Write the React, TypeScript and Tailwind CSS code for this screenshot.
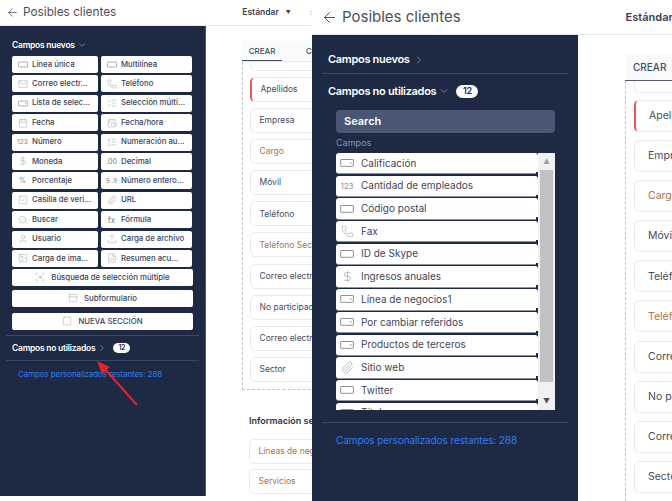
import {
  ArrowLeft,
  ChevronDown,
  ChevronRight,
  DollarSign,
  Paperclip,
  Phone,
  Mail,
  User,
  Upload,
  Image,
  ListChecks,
  ListOrdered,
  CalendarClock,
  Calendar,
  SquareCheck,
  SearchCheck,
  PanelTop,
  Square,
  ScanSearch,
  FileSpreadsheet,
} from "lucide-react";

const font = "font-['Inter','Liberation_Sans',sans-serif]";

const TextBox = ({ size = 12 }: { size?: number }) => (
  <svg width={size} height={size * 0.7} viewBox="0 0 14 10" fill="none" stroke="#8b8f96" strokeWidth="1">
    <rect x="0.5" y="1.5" width="13" height="7" rx="0.5" />
  </svg>
);

const SelectBox = ({ size = 12 }: { size?: number }) => (
  <svg width={size} height={size * 0.7} viewBox="0 0 14 10" fill="none" stroke="#8b8f96" strokeWidth="1">
    <rect x="0.5" y="1.5" width="13" height="7" rx="0.5" />
    <path d="M9.5 4.5h2.5l-1.25 1.5z" fill="#8b8f96" stroke="none" />
  </svg>
);

const Glyph = ({ text, className = "" }: { text: string; className?: string }) => (
  <span className={`text-[#8b8f96] leading-none ${className}`}>{text}</span>
);

const lucide = { size: 10, strokeWidth: 1, color: "#8b8f96" };

type Field = { label: string; icon: React.ReactNode };

const newFields: Field[] = [
  { label: "Línea única", icon: <TextBox size={10} /> },
  { label: "Multilínea", icon: <TextBox size={10} /> },
  { label: "Correo electr...", icon: <Mail {...lucide} /> },
  { label: "Teléfono", icon: <Phone {...lucide} /> },
  { label: "Lista de selec...", icon: <SelectBox size={10} /> },
  { label: "Selección múlti...", icon: <ListChecks {...lucide} /> },
  { label: "Fecha", icon: <Calendar {...lucide} /> },
  { label: "Fecha/hora", icon: <CalendarClock {...lucide} /> },
  { label: "Número", icon: <Glyph text="123" className="text-[6.5px]" /> },
  { label: "Numeración au...", icon: <ListOrdered {...lucide} /> },
  { label: "Moneda", icon: <DollarSign {...lucide} /> },
  { label: "Decimal", icon: <Glyph text=".00" className="text-[7px]" /> },
  { label: "Porcentaje", icon: <Glyph text="%" className="text-[7px]" /> },
  { label: "Número entero...", icon: <Glyph text="9..9" className="text-[6px]" /> },
  { label: "Casilla de veri...", icon: <SquareCheck {...lucide} /> },
  { label: "URL", icon: <Paperclip {...lucide} /> },
  { label: "Buscar", icon: <SearchCheck {...lucide} /> },
  { label: "Fórmula", icon: <Glyph text="fx" className="text-[8px]" /> },
  { label: "Usuario", icon: <User {...lucide} /> },
  { label: "Carga de archivo", icon: <Upload {...lucide} /> },
  { label: "Carga de ima...", icon: <Image {...lucide} /> },
  { label: "Resumen acu...", icon: <FileSpreadsheet {...lucide} /> },
];

const unusedFields: Field[] = [
  { label: "Calificación", icon: <SelectBox size={14} /> },
  { label: "Cantidad de empleados", icon: <Glyph text="123" className="text-[8px]" /> },
  { label: "Código postal", icon: <TextBox size={14} /> },
  { label: "Fax", icon: <Phone size={13} strokeWidth={1} color="#8b8f96" /> },
  { label: "ID de Skype", icon: <TextBox size={14} /> },
  { label: "Ingresos anuales", icon: <DollarSign size={13} strokeWidth={1} color="#8b8f96" /> },
  { label: "Línea de negocios1", icon: <SelectBox size={14} /> },
  { label: "Por cambiar referidos", icon: <SelectBox size={14} /> },
  { label: "Productos de terceros", icon: <SelectBox size={14} /> },
  { label: "Sitio web", icon: <Paperclip size={13} strokeWidth={1} color="#8b8f96" /> },
  { label: "Twitter", icon: <TextBox size={14} /> },
  { label: "Título", icon: <TextBox size={14} /> },
];

const leftCards = [
  { label: "Apellidos", required: true },
  { label: "Empresa" },
  { label: "Cargo", brown: true },
  { label: "Móvil" },
  { label: "Teléfono" },
  { label: "Teléfono Secundario", brown: true },
  { label: "Correo electrónico" },
  { label: "No participación" },
  { label: "Correo electrónico" },
  { label: "Sector" },
];

const WideButton = ({ label, icon, className = "" }: { label: string; icon: React.ReactNode; className?: string }) => (
  <div className={`h-[17px] w-[181px] rounded-[2px] bg-white flex items-center justify-center gap-[6px] text-[7.8px] font-medium text-[#3b4257] ${className}`}>
    {icon}
    <span>{label}</span>
  </div>
);

const FormCard = ({
  label,
  required,
  brown,
  big,
}: {
  label: string;
  required?: boolean;
  brown?: boolean;
  big?: boolean;
}) => (
  <div
    className={`shrink-0 w-[220px] bg-white border border-[#e6ebf3] rounded-[5px] flex items-center whitespace-nowrap ${
      big ? "h-[32px] pl-[13px] text-[10.5px]" : "h-[25px] pl-[8.5px] text-[8.5px]"
    } ${required ? "border-l-2 border-l-[#f0545c]" : ""} ${brown ? "text-[#a8744a]" : "text-[#454b5e]"}`}
  >
    {label}
  </div>
);

const Badge = ({ big }: { big?: boolean }) => (
  <span
    className={`bg-white text-[#1e2a44] rounded-full font-semibold flex items-center justify-center ${
      big ? "w-[22px] h-[13px] text-[9px]" : "w-[17px] h-[10px] text-[7px]"
    }`}
  >
    12
  </span>
);

const LeftPanel = () => (
  <div className="relative w-[312px] shrink-0 h-full flex flex-col overflow-hidden">
    <div className="h-[26px] shrink-0 border-b border-[#e4e8ef] flex items-center pl-[6px] gap-[4px] whitespace-nowrap">
      <ArrowLeft size={13} strokeWidth={1.3} color="#38425c" className="shrink-0" />
      <span className="shrink-0 text-[11.8px] text-[#4a5060]">Posibles clientes</span>
      <span className="shrink-0 ml-[122px] text-[8.5px] font-semibold text-[#3a4052]">Estándar</span>
      <span className="shrink-0 ml-[3px] text-[5px] text-[#3a4052]">▼</span>
      <span className="shrink-0 ml-[15px] text-[9px] text-[#c5c8ce]">≡</span>
    </div>
    <div className="flex flex-1 min-h-0">
      <aside className="w-[206px] shrink-0 bg-[#1e2a44] border-r border-[#4a5a75] h-[470px] pt-[13px]">
        <div className="pl-[12px] flex items-center gap-[2px] text-[8.5px] font-semibold text-white h-[12px] mb-[5px] tracking-[-0.25px]">
          Campos nuevos <ChevronDown size={10} strokeWidth={1.2} color="#b7c0d2" />
        </div>
        <div className="pl-[12px] grid grid-cols-[86px_91px] gap-x-[3px] gap-y-[2.4px] auto-rows-[17px]">
          {newFields.map((f) => (
            <div key={f.label} className="bg-white rounded-[2px] flex items-center text-[7.8px] font-medium text-[#3b4257] whitespace-nowrap">
              <span className="w-[20px] pl-[1px] shrink-0 flex justify-center">{f.icon}</span>
              <span>{f.label}</span>
            </div>
          ))}
        </div>
        <div className="pl-[12px] mt-[2px] flex flex-col gap-[4px]">
          <WideButton label="Búsqueda de selección múltiple" icon={<ScanSearch {...lucide} />} />
          <WideButton label="Subformulario" icon={<PanelTop {...lucide} />} />
          <WideButton label="NUEVA SECCIÓN" icon={<Square {...lucide} />} className="mt-[2px]" />
        </div>
        <div className="mx-[6px] mt-[5px] border-t border-[#38476a] h-[25px] flex items-center pl-[6px] gap-[2px] text-[8.5px] font-semibold text-white tracking-[-0.25px]">
          Campos no utilizados <ChevronRight size={10} strokeWidth={1.2} color="#b7c0d2" />
          <span className="ml-[4px]">
            <Badge />
          </span>
        </div>
        <div className="mx-[6px] border-t border-[#38476a] pt-[7px] pl-[12px] text-[8px] text-[#2f7bf5] tracking-[-0.1px] whitespace-nowrap">
          Campos personalizados restantes: 288
        </div>
      </aside>
      <main className="flex-1 pl-[36px] pt-[15px] min-w-0">
        <div className="w-[220px] h-[21px] bg-[#f9fafc] border-b border-[#e4e8ef] relative flex items-center text-[8px] font-medium text-[#454b5e]">
          <span className="w-[40px] h-full flex items-center justify-center border-b border-[#454b5e]">CREAR</span>
          <span className="ml-[24px]">CONVERTIR</span>
        </div>
        <div className="w-[220px] h-[328px] border-l border-b border-dashed border-[#bfc3c9] pl-[7px] flex flex-col">
          <div className="w-[220px] h-[9px] shrink-0 border border-t-0 border-[#e6ebf3] rounded-b-[5px]" />
          <div className="flex flex-col gap-[6.1px] mt-[6px]">
            {leftCards.map((c, i) => (
              <FormCard key={i} label={c.label} required={c.required} brown={c.brown} />
            ))}
          </div>
        </div>
        <div className="pl-[7px] mt-[24px] text-[9px] font-semibold text-[#2c3244] whitespace-nowrap">Información se</div>
        <div className="pl-[7px] mt-[11px] flex flex-col gap-[5px]">
          <FormCard label="Líneas de negocio" brown />
          <FormCard label="Servicios" brown />
        </div>
      </main>
    </div>
    <svg className="absolute left-[90px] top-[355px]" width="54" height="56" viewBox="0 0 54 56">
      <path d="M47 50 L13 12" stroke="#e3242b" strokeWidth="2" />
      <path d="M7 6 L20 12 L12 19 Z" fill="#e3242b" />
    </svg>
  </div>
);

const RightPanel = () => (
  <div className="w-[360px] shrink-0 h-full flex flex-col overflow-hidden">
    <div className="h-[35px] shrink-0 border-b border-[#e4e8ef] flex items-center pl-[9px] gap-[4px] whitespace-nowrap">
      <ArrowLeft size={17} strokeWidth={1.3} color="#38425c" className="shrink-0" />
      <span className="shrink-0 text-[15px] text-[#4a5060]">Posibles clientes</span>
      <span className="shrink-0 ml-[161px] text-[11px] font-semibold text-[#3a4052]">Estándar</span>
    </div>
    <div className="flex flex-1 min-h-0">
      <aside className="w-[266px] shrink-0 bg-[#1e2a44] flex flex-col">
        <div className="mx-[10px] h-[39px] border-b border-[#38476a] flex items-center pl-[6px] gap-[3px] text-[11px] font-semibold text-white tracking-[-0.3px] pt-[11px]">
          Campos nuevos <ChevronRight size={12} strokeWidth={1.2} color="#b7c0d2" />
        </div>
        <div className="mx-[10px] h-[36px] flex items-center pl-[6px] gap-[2px] text-[11px] font-semibold text-white tracking-[-0.3px] pb-[2px]">
          Campos no utilizados <ChevronDown size={12} strokeWidth={1.2} color="#b7c0d2" />
          <span className="ml-[4px]">
            <Badge big />
          </span>
        </div>
        <div className="ml-[24px] w-[219px] h-[23px] rounded-[4px] bg-[#4a5673] flex items-center pl-[8px] text-[11px] font-semibold text-white">
          Search
        </div>
        <div className="ml-[24px] h-[20px] flex items-center text-[9px] text-[#7f93b8]">Campos</div>
        <div className="ml-[24px] w-[219px] h-[257px] flex overflow-hidden">
          <div className="w-[202px] flex flex-col gap-[1.3px] shrink-0">
            {unusedFields.map((f) => (
              <div key={f.label} className="relative shrink-0 h-[21.4px] bg-white rounded-[3px] border-b border-[#8c93a3] flex items-center text-[10px] text-[#3f455a]">
                <span className="w-[22px] shrink-0 flex justify-center">{f.icon}</span>
                <span className="ml-[3px]">{f.label}</span>
                <span className="absolute right-0 bottom-[-1.5px] w-[2px] h-[3px] bg-[#1e2a44]" />
              </div>
            ))}
          </div>
          <div className="w-[17px] bg-[#f1f1f1] flex flex-col items-center">
            <span className="h-[17px] flex items-center text-[7px] text-[#a3a3a3] leading-none">▲</span>
            <span className="w-[13px] h-[212px] bg-[#c1c1c1]" />
            <span className="mt-auto h-[17px] flex items-center text-[7px] text-[#505050] leading-none">▼</span>
          </div>
        </div>
        <div className="mx-[10px] mt-[12px] border-t border-[#38476a] pt-[10px] pl-[14px] text-[10px] text-[#2f7bf5] tracking-[-0.1px]">
          Campos personalizados restantes: 288
        </div>
      </aside>
      <main className="flex-1 pl-[47px] pt-[19px] min-w-0">
        <div className="w-[220px] h-[27px] bg-[#f9fafc] border-b border-[#555c6c] flex items-center pl-[8px] text-[10px] font-medium text-[#454b5e]">
          CREAR
        </div>
        <div className="w-[220px] h-[420px] border-l border-dashed border-[#bfc3c9] pl-[8px]">
          <div className="w-[220px] h-[12px] border border-t-0 border-[#e6ebf3] rounded-b-[5px]" />
          <div className="flex flex-col gap-[8.1px] mt-[7px]">
            {leftCards.map((c, i) => (
              <FormCard key={i} label={c.label} required={c.required} brown={c.brown} big />
            ))}
          </div>
        </div>
      </main>
    </div>
  </div>
);

export default function App() {
  return (
    <div className={`w-[672px] h-[501px] flex bg-white overflow-hidden ${font}`}>
      <LeftPanel />
      <RightPanel />
    </div>
  );
}
